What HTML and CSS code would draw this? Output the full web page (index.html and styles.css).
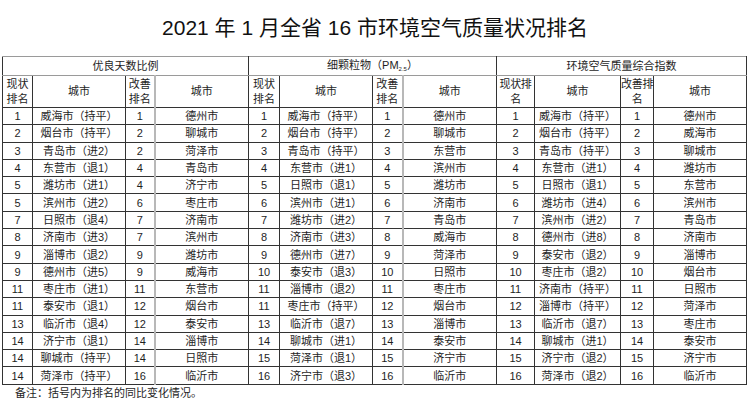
FILE: index.html
```html
<!DOCTYPE html>
<html lang="zh-CN">
<head>
<meta charset="utf-8">
<title>2021年1月全省16市环境空气质量状况排名</title>
<link rel="stylesheet" href="styles.css">
</head>
<body>
<h1 class="title">2021 年 1 月全省 16 市环境空气质量状况排名</h1>
<table class="rank">
<colgroup>
<col class="c-rank1"><col class="c-city"><col class="c-imp1"><col class="c-city2">
<col class="c-rank2"><col class="c-city"><col class="c-imp2"><col class="c-city2">
<col class="c-rank3"><col class="c-city3"><col class="c-imp3"><col class="c-city4">
</colgroup>
<thead>
<tr class="h1">
<th colspan="4">优良天数比例</th>
<th colspan="4">细颗粒物（PM<sub>2.5</sub>）</th>
<th colspan="4">环境空气质量综合指数</th>
</tr>
<tr class="h2">
<th>现状排名</th><th>城市</th><th>改善排名</th><th class="soft">城市</th>
<th>现状排名</th><th>城市</th><th>改善排名</th><th class="soft">城市</th>
<th class="tight">现状排<br>名</th><th>城市</th><th class="tight">改善排<br>名</th><th>城市</th>
</tr>
</thead>
<tbody>
<tr><td>1</td><td>威海市（持平）</td><td>1</td><td class="soft">德州市</td><td>1</td><td>威海市（持平）</td><td>1</td><td class="soft">德州市</td><td>1</td><td>威海市（持平）</td><td>1</td><td>德州市</td></tr>
<tr><td>2</td><td>烟台市（持平）</td><td>2</td><td class="soft">聊城市</td><td>2</td><td>烟台市（持平）</td><td>2</td><td class="soft">聊城市</td><td>2</td><td>烟台市（持平）</td><td>2</td><td>威海市</td></tr>
<tr><td>3</td><td>青岛市（进2）</td><td>2</td><td class="soft">菏泽市</td><td>3</td><td>青岛市（持平）</td><td>3</td><td class="soft">东营市</td><td>3</td><td>青岛市（持平）</td><td>3</td><td>聊城市</td></tr>
<tr><td>4</td><td>东营市（退1）</td><td>4</td><td class="soft">青岛市</td><td>4</td><td>东营市（进1）</td><td>4</td><td class="soft">滨州市</td><td>4</td><td>东营市（进1）</td><td>4</td><td>潍坊市</td></tr>
<tr><td>5</td><td>潍坊市（进1）</td><td>4</td><td class="soft">济宁市</td><td>5</td><td>日照市（退1）</td><td>5</td><td class="soft">潍坊市</td><td>5</td><td>日照市（退1）</td><td>5</td><td>东营市</td></tr>
<tr><td>5</td><td>滨州市（进2）</td><td>6</td><td class="soft">枣庄市</td><td>6</td><td>滨州市（进1）</td><td>6</td><td class="soft">济南市</td><td>6</td><td>潍坊市（进4）</td><td>6</td><td>滨州市</td></tr>
<tr><td>7</td><td>日照市（退4）</td><td>7</td><td class="soft">济南市</td><td>7</td><td>潍坊市（进2）</td><td>7</td><td class="soft">青岛市</td><td>7</td><td>滨州市（进2）</td><td>7</td><td>青岛市</td></tr>
<tr><td>8</td><td>济南市（进3）</td><td>7</td><td class="soft">滨州市</td><td>8</td><td>济南市（进3）</td><td>8</td><td class="soft">威海市</td><td>8</td><td>德州市（进8）</td><td>8</td><td>济南市</td></tr>
<tr><td>9</td><td>淄博市（退2）</td><td>9</td><td class="soft">潍坊市</td><td>9</td><td>德州市（进7）</td><td>9</td><td class="soft">菏泽市</td><td>9</td><td>泰安市（退2）</td><td>9</td><td>淄博市</td></tr>
<tr><td>9</td><td>德州市（进5）</td><td>9</td><td class="soft">威海市</td><td>10</td><td>泰安市（退3）</td><td>10</td><td class="soft">日照市</td><td>10</td><td>枣庄市（退2）</td><td>10</td><td>烟台市</td></tr>
<tr><td>11</td><td>枣庄市（进1）</td><td>11</td><td class="soft">东营市</td><td>11</td><td>淄博市（退2）</td><td>11</td><td class="soft">枣庄市</td><td>11</td><td>济南市（持平）</td><td>11</td><td>日照市</td></tr>
<tr><td>11</td><td>泰安市（退1）</td><td>12</td><td class="soft">烟台市</td><td>11</td><td>枣庄市（持平）</td><td>12</td><td class="soft">烟台市</td><td>12</td><td>淄博市（持平）</td><td>12</td><td>菏泽市</td></tr>
<tr><td>13</td><td>临沂市（退4）</td><td>12</td><td class="soft">泰安市</td><td>13</td><td>临沂市（退7）</td><td>13</td><td class="soft">淄博市</td><td>13</td><td>临沂市（退7）</td><td>13</td><td>枣庄市</td></tr>
<tr><td>14</td><td>济宁市（退1）</td><td>14</td><td class="soft">淄博市</td><td>14</td><td>聊城市（进1）</td><td>14</td><td class="soft">泰安市</td><td>14</td><td>聊城市（进1）</td><td>14</td><td>泰安市</td></tr>
<tr><td>14</td><td>聊城市（持平）</td><td>14</td><td class="soft">日照市</td><td>15</td><td>菏泽市（退1）</td><td>15</td><td class="soft">济宁市</td><td>15</td><td>济宁市（退2）</td><td>15</td><td>济宁市</td></tr>
<tr><td>14</td><td>菏泽市（持平）</td><td>16</td><td class="soft">临沂市</td><td>16</td><td>济宁市（退3）</td><td>16</td><td class="soft">临沂市</td><td>16</td><td>菏泽市（退2）</td><td>16</td><td>临沂市</td></tr>
</tbody>
</table>
<p class="note">备注：括号内为排名的同比变化情况。</p>
</body>
</html>
```

FILE: styles.css
```css
html, body {
  margin: 0;
  padding: 0;
  background: #ffffff;
}
body {
  width: 750px;
  height: 400px;
  overflow: hidden;
  color: #1e1e1e;
  font-family: "Liberation Sans", "Noto Sans CJK SC", sans-serif;
}
.title {
  margin: 0;
  height: 56px;
  line-height: 56px;
  text-align: center;
  font-size: 21px;
  font-weight: normal;
  color: #111111;
}
.rank {
  margin-left: 2px;
  width: 744px;
  border-collapse: collapse;
  table-layout: fixed;
  font-size: 11px;
}
.c-rank1 { width: 30px; }
.c-rank2 { width: 31px; }
.c-rank3 { width: 38px; }
.c-city { width: 93px; }
.c-city3 { width: 86px; }
.c-imp1 { width: 29px; }
.c-imp2 { width: 30px; }
.c-imp3 { width: 33px; }
.c-city2 { width: 94px; }
.c-city4 { width: 93px; }
.rank th,
.rank td {
  border: 1px solid #333333;
  padding: 0;
  text-align: center;
  vertical-align: middle;
  font-weight: normal;
  overflow: hidden;
  white-space: normal;
}
.rank .soft {
  border-left: 2px solid #b8b8b8;
}
.h1 {
  height: 19px;
}
.h1 th {
  border-top: 1px solid #9a9a9a;
  border-bottom: 1px solid #9a9a9a;
  line-height: 14px;
}
.h1 sub {
  font-size: 6px;
  vertical-align: baseline;
  position: relative;
  top: 2px;
}
.h2 {
  height: 32px;
}
.h2 th {
  line-height: 15px;
  font-size: 11px;
}
.rank .h2 .tight {
  white-space: nowrap;
  overflow: visible;
  letter-spacing: -0.3px;
}
.rank tbody tr {
  height: 17.3px;
}
.rank td {
  line-height: 14px;
}
.note {
  margin: 0;
  padding-left: 15px;
  line-height: 16px;
  font-size: 11px;
  color: #1e1e1e;
}
```
